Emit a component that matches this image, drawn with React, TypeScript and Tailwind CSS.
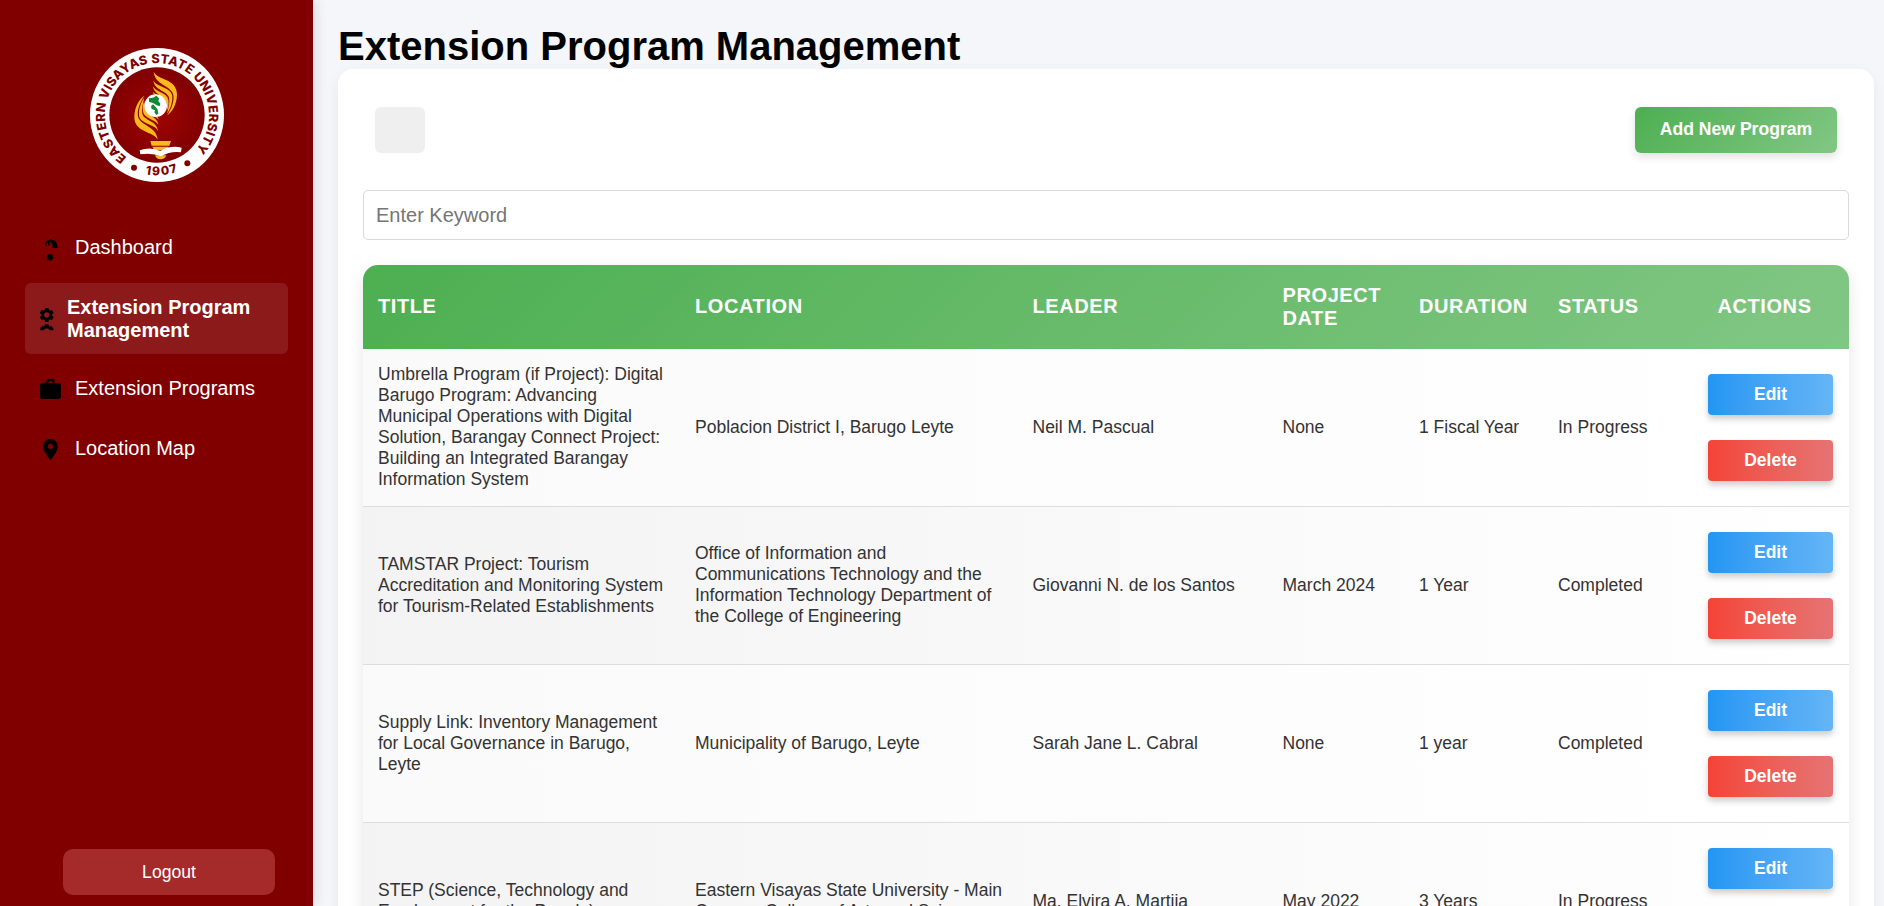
import React from "react";

type Program = {
  title: string;
  location: string;
  leader: string;
  date: string;
  duration: string;
  status: string;
};

const programs: Program[] = [
  {
    title:
      "Umbrella Program (if Project): Digital Barugo Program: Advancing Municipal Operations with Digital Solution, Barangay Connect Project: Building an Integrated Barangay Information System",
    location: "Poblacion District I, Barugo Leyte",
    leader: "Neil M. Pascual",
    date: "None",
    duration: "1 Fiscal Year",
    status: "In Progress",
  },
  {
    title:
      "TAMSTAR Project: Tourism Accreditation and Monitoring System for Tourism-Related Establishments",
    location:
      "Office of Information and Communications Technology and the Information Technology Department of the College of Engineering",
    leader: "Giovanni N. de los Santos",
    date: "March 2024",
    duration: "1 Year",
    status: "Completed",
  },
  {
    title: "Supply Link: Inventory Management for Local Governance in Barugo, Leyte",
    location: "Municipality of Barugo, Leyte",
    leader: "Sarah Jane L. Cabral",
    date: "None",
    duration: "1 year",
    status: "Completed",
  },
  {
    title: "STEP (Science, Technology and Employment for the People)",
    location: "Eastern Visayas State University - Main Campus College of Arts and Sciences",
    leader: "Ma. Elvira A. Martija",
    date: "May 2022",
    duration: "3 Years",
    status: "In Progress",
  },
];

function Flame() {
  return (
    <g fill="#f8b81f">
      <path d="M-10-130C2-104 60-110 60-62C60-32 45-8 30 2C44-20 52-40 49-60C43-90-6-88-10-130Z" />
      <path d="M-11-104C-2-82 44-84 46-56C47-34 38-14 30-4C34-22 39-38 36-52C30-74-8-72-11-104Z" />
      <path d="M-12-86C-4-68 30-68 34-46C36-34 34-22 30-14C30-28 30-36 25-44C16-60-10-62-12-86Z" />
      <path d="M-13-70C-5-60 10-60 20-48L16-48C6-56-10-56-13-70Z" />
    </g>
  );
}

function Seal() {
  return (
    <svg viewBox="-201 -201 402 402" className="size-[134px]">
      <defs>
        <radialGradient id="seal-core">
          <stop offset="0" stopColor="#a00404" />
          <stop offset="1" stopColor="#800000" />
        </radialGradient>
        <path id="seal-top" d="M-90.6 127A156 156 0 1 1 113.2 107.4" />
        <path id="seal-bottom" d="M-35 177.6A181 181 0 0 0 66 168.5" />
      </defs>
      <circle r="201" fill="#fff" />
      <circle r="143" fill="url(#seal-core)" />
      <g fill="#800000" fontFamily="Inter, 'Open Sans', sans-serif" fontWeight="800">
        <text fontSize="38" textLength="752">
          <textPath href="#seal-top" textLength="752">
            EASTERN VISAYAS STATE UNIVERSITY
          </textPath>
        </text>
        <text fontSize="36" textLength="99">
          <textPath href="#seal-bottom" textLength="99">
            1907
          </textPath>
        </text>
      </g>
      <circle cx="-69" cy="158" r="9" fill="#800000" />
      <circle cx="91" cy="145" r="9" fill="#800000" />
      <Flame />
      <g transform="rotate(180 -4 -28)">
        <Flame />
      </g>
      <circle cx="-4" cy="-28" r="34" fill="#fff" />
      <path
        d="M-24-50L-12-52L-2-58L6-50L4-42L10-34L8-26L-2-30L-12-36L-24-40Z M-18-26L-12-32L-4-24L2-16L4-4L-2 0L-8-8L-6-14L-16-18Z"
        fill="#0c8a34"
      />
      <path d="M-20 78H42L37 92H-16Z M-14 95H35L30 106H-8Z" fill="#f8b81f" />
      <path d="M-6 121H28Q24 133 11 133Q-2 133-6 121Z" fill="#f8b81f" />
      <path
        d="M-52 106Q-20 94 10 108Q40 90 74 98L72 112Q40 108 12 124Q-16 112-50 118Z"
        fill="#fff"
      />
    </svg>
  );
}

function DashboardIcon() {
  return (
    <svg viewBox="0 0 25 25" className="size-[25px] shrink-0">
      <path
        d="M7.4 10.4C6.6 5.6 10 3.4 13 3.4C17.4 3.6 19.6 7 19.6 12H14.2C15.4 9.4 13.6 6.4 11.4 5.6C9.2 5.8 8 7.6 8.4 10.4Z"
        fill="#000"
      />
      <path d="M9.4 6.6L11.4 6L12 8.8L10.6 9.4Z" fill="#000" />
      <circle cx="11.9" cy="21.2" r="3.3" fill="#000" />
    </svg>
  );
}

function ManageIcon() {
  return (
    <svg viewBox="0 0 18 25" className="h-[25px] w-[17.5px] shrink-0">
      <path
        transform="translate(-0.1 -0.2) scale(0.76)"
        d="M19.14 12.94c.04-.3.06-.61.06-.94 0-.32-.02-.64-.07-.94l2.03-1.58c.18-.14.23-.41.12-.61l-1.92-3.32c-.12-.22-.37-.29-.59-.22l-2.39.96c-.5-.38-1.03-.7-1.62-.94l-.36-2.54c-.04-.24-.24-.41-.48-.41h-3.84c-.24 0-.43.17-.47.41l-.36 2.54c-.59.24-1.13.57-1.62.94l-2.39-.96c-.22-.08-.47 0-.59.22L2.74 8.87c-.12.21-.08.47.12.61l2.03 1.58c-.05.3-.09.63-.09.94s.02.64.07.94l-2.03 1.58c-.18.14-.23.41-.12.61l1.92 3.32c.12.22.37.29.59.22l2.39-.96c.5.38 1.03.7 1.62.94l.36 2.54c.05.24.24.41.48.41h3.84c.24 0 .44-.17.47-.41l.36-2.54c.59-.24 1.13-.56 1.62-.94l2.39.96c.22.08.47 0 .59-.22l1.92-3.32c.12-.22.07-.47-.12-.61l-2.01-1.58zM12 15.6c-1.98 0-3.6-1.62-3.6-3.6s1.62-3.6 3.6-3.6 3.6 1.62 3.6 3.6-1.62 3.6-3.6 3.6z"
      />
      <path d="M2.2 24.6V22.4L4.4 20.2L6.2 20.6L7.6 18.2H10.4L11.8 20.6L13.6 20.2L15.8 22.4V24.6H12.2L11 23.4L9 22.6L7 23.4L5.8 24.6Z" />
    </svg>
  );
}

function WorkIcon() {
  return (
    <svg viewBox="0 0 24 24" className="size-[25px] shrink-0">
      <path d="M20 6h-4V4c0-1.11-.89-2-2-2h-4c-1.11 0-2 .89-2 2v2H4c-1.11 0-1.99.89-1.99 2L2 19c0 1.11.89 2 2 2h16c1.11 0 2-.89 2-2V8c0-1.11-.89-2-2-2zm-6 0h-4V4h4v2z" />
    </svg>
  );
}

function PinIcon() {
  return (
    <svg viewBox="0 0 24 24" className="size-[25px] shrink-0">
      <path d="M12 2C8.13 2 5 5.13 5 9c0 5.25 7 13 7 13s7-7.75 7-13c0-3.87-3.13-7-7-7zm0 9.5c-1.38 0-2.5-1.12-2.5-2.5s1.12-2.5 2.5-2.5 2.5 1.12 2.5 2.5-1.12 2.5-2.5 2.5z" />
    </svg>
  );
}

function NavItem({ icon, label, active }: { icon: React.ReactNode; label: string; active?: boolean }) {
  return (
    <a
      className={
        active
          ? "flex h-[71px] items-center gap-[12px] rounded-[6px] bg-[#8c1a1a] px-[12.5px] font-bold"
          : "flex h-[50px] items-center gap-[12.5px] rounded-[6px] px-[12.5px]"
      }
    >
      {icon}
      <span className={active ? "" : "pb-px"}>{label}</span>
    </a>
  );
}

function Sidebar() {
  return (
    <aside className="z-10 flex w-[313px] shrink-0 flex-col bg-[#800000] px-[25px] pt-[47.5px] shadow-[2px_0_12px_rgba(0,0,0,0.12)]">
      <div className="flex justify-center">
        <Seal />
      </div>
      <nav className="mt-[41.5px] flex flex-col gap-[10px] text-[20px] leading-[23px] text-white">
        <NavItem icon={<DashboardIcon />} label="Dashboard" />
        <NavItem icon={<ManageIcon />} label="Extension Program Management" active />
        <NavItem icon={<WorkIcon />} label="Extension Programs" />
        <NavItem icon={<PinIcon />} label="Location Map" />
      </nav>
      <button className="mt-auto mb-[11px] ml-[38px] h-[46px] w-[212px] rounded-[10px] bg-[#a52a2a] text-[17.6px] text-white">
        Logout
      </button>
    </aside>
  );
}

const head = "px-[15px] pb-px text-left text-[20px] leading-[23px] tracking-[0.6px]";
const cell = "border-b border-[#ddd] px-[15px] pb-px align-middle";
const action = "h-[41px] w-[125px] rounded-[4px] font-bold text-white shadow-[0_4px_6px_rgba(0,0,0,0.2)]";

export default function App() {
  return (
    <div className="flex h-[906px] w-full overflow-hidden bg-[#f4f6fa] font-['Liberation_Sans',Arial,sans-serif] text-[#333]">
      <Sidebar />
      <main className="flex min-w-0 flex-1 flex-col pt-[23px] pr-[10px] pl-[25px]">
        <h1 className="text-[40px] leading-[46px] font-bold text-black">Extension Program Management</h1>
        <section className="rounded-t-[15px] bg-white px-[25px] pt-[25px] shadow-[0_5px_15px_rgba(0,0,0,0.06)]">
          <div className="flex items-center justify-between px-[12px] pt-[13px] pb-[12px]">
            <button className="h-[46px] w-[50px] rounded-[6px] bg-[#efefef]" />
            <button className="h-[46px] w-[202px] rounded-[6px] bg-linear-135 from-[#4caf50] to-[#81c784] pb-[2px] text-[17.6px] font-bold text-white shadow-[0_4px_8px_rgba(0,0,0,0.12)]">
              Add New Program
            </button>
          </div>
          <input
            placeholder="Enter Keyword"
            className="mt-[25px] block h-[50px] w-full rounded-[5px] border border-[#d9dadb] px-[12px] text-[20px] placeholder:text-[#757575]"
          />
          <div className="mt-[25px] overflow-hidden rounded-t-[15px] shadow-[0_5px_15px_rgba(0,0,0,0.1)]">
            <table className="w-full table-fixed border-separate border-spacing-0">
              <colgroup>
                <col className="w-[317px]" />
                <col className="w-[337.5px]" />
                <col className="w-[250px]" />
                <col className="w-[136.5px]" />
                <col className="w-[139px]" />
                <col className="w-[137px]" />
                <col className="w-[169px]" />
              </colgroup>
              <thead>
                <tr className="h-[84px] bg-linear-135 from-[#4caf50] to-[#81c784] text-white">
                  <th className={head}>TITLE</th>
                  <th className={head}>LOCATION</th>
                  <th className={head}>LEADER</th>
                  <th className={head}>PROJECT DATE</th>
                  <th className={head}>DURATION</th>
                  <th className={head}>STATUS</th>
                  <th className="pb-px text-center text-[20px] leading-[23px] tracking-[0.6px]">ACTIONS</th>
                </tr>
              </thead>
              <tbody className="text-[17.5px] leading-[21px]">
                {programs.map((p) => (
                  <tr
                    key={p.title}
                    className="h-[158px] bg-linear-to-r from-[#fafafa] to-white even:from-[#f3f3f3]"
                  >
                    <td className={cell}>{p.title}</td>
                    <td className={cell}>{p.location}</td>
                    <td className={cell}>{p.leader}</td>
                    <td className={cell}>{p.date}</td>
                    <td className={cell}>{p.duration}</td>
                    <td className={cell}>{p.status}</td>
                    <td className="border-b border-[#ddd] pr-[16px] align-middle">
                      <div className="flex flex-col items-end gap-[25px]">
                        <button className={`${action} bg-linear-to-r from-[#2196f3] to-[#64b5f6]`}>Edit</button>
                        <button className={`${action} bg-linear-to-r from-[#f44336] to-[#e57373]`}>Delete</button>
                      </div>
                    </td>
                  </tr>
                ))}
              </tbody>
            </table>
          </div>
        </section>
      </main>
    </div>
  );
}
